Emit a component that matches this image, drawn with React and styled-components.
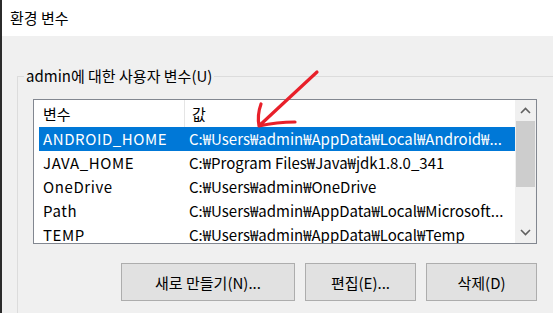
import React from "react";
import styled, { createGlobalStyle } from "styled-components";

const GlobalStyle = createGlobalStyle`
  html, body {
    margin: 0;
    padding: 0;
    background: #f0f0f0;
  }
  body {
    font-family: "Noto Sans CJK KR", "Noto Sans", sans-serif;
    font-size: 15px;
    color: #000;
  }
`;

const variables = [
  { name: "ANDROID_HOME", value: "C:₩Users₩admin₩AppData₩Local₩Android₩...", selected: true },
  { name: "JAVA_HOME", value: "C:₩Program Files₩Java₩jdk1.8.0_341" },
  { name: "OneDrive", value: "C:₩Users₩admin₩OneDrive" },
  { name: "Path", value: "C:₩Users₩admin₩AppData₩Local₩Microsoft..." },
  { name: "TEMP", value: "C:₩Users₩admin₩AppData₩Local₩Temp" },
];

const Window = styled.div`
  position: relative;
  width: 553px;
  height: 313px;
  overflow: hidden;
  box-sizing: border-box;
  border-left: 2px solid #2b2b2b;
  background: #f0f0f0;
`;

const TitleBar = styled.div`
  height: 36px;
  background: #fff;
  display: flex;
  align-items: center;
  padding-left: 8px;
  font-size: 15px;
  line-height: 20px;
`;

const Body = styled.div`
  padding: 30px 0 0 15px;
`;

const Group = styled.fieldset`
  margin: 0;
  width: 560px;
  height: 260px;
  box-sizing: border-box;
  border: 1px solid #dcdcdc;
  padding: 13px 0 0 15px;
`;

const Legend = styled.legend`
  margin-left: -9px;
  padding: 0 2px;
  line-height: 20px;
  font-size: 15px;
`;

const ListView = styled.div`
  width: 504px;
  height: 145px;
  box-sizing: border-box;
  border: 1px solid #828790;
  background: #fff;
  display: flex;
`;

const Table = styled.div`
  flex: 1;
  min-width: 0;
  overflow: hidden;
`;

const HeaderRow = styled.div`
  display: flex;
  height: 27px;
  align-items: stretch;
`;

const HeaderCell = styled.div`
  width: ${(p) => p.$width}px;
  flex: ${(p) => (p.$width ? "none" : "1")};
  display: flex;
  align-items: center;
  padding-left: ${(p) => p.$pad}px;
  box-sizing: border-box;
  border-right: ${(p) => (p.$sep ? "1px solid #e5e5e5" : "none")};
  line-height: 20px;
`;

const Row = styled.div`
  display: flex;
  height: 24px;
  align-items: center;
  margin-left: 5px;
  background: ${(p) => (p.$selected ? "#0078d7" : "transparent")};
  color: ${(p) => (p.$selected ? "#fff" : "#000")};
  line-height: 20px;
`;

const Cell = styled.div`
  width: ${(p) => (p.$width ? `${p.$width}px` : "auto")};
  flex: ${(p) => (p.$width ? "none" : "1")};
  padding-left: 4px;
  box-sizing: border-box;
  white-space: nowrap;
  overflow: hidden;
  letter-spacing: ${(p) => p.$spacing || 0}px;
`;

const ScrollBar = styled.div`
  width: 21px;
  background: #f0f0f0;
  display: flex;
  flex-direction: column;
`;

const ScrollButton = styled.div`
  height: 21px;
  display: flex;
  align-items: center;
  justify-content: center;
`;

const Track = styled.div`
  flex: 1;
  padding: 0 1px;
`;

const Thumb = styled.div`
  height: 66px;
  background: #cdcdcd;
`;

const ButtonRow = styled.div`
  display: flex;
  justify-content: flex-end;
  gap: 10px;
  width: 504px;
  margin-top: 19px;
`;

const Button = styled.button`
  width: ${(p) => p.$width}px;
  height: 38px;
  box-sizing: border-box;
  background: #e1e1e1;
  border: 1px solid #adadad;
  font-family: "Noto Sans CJK KR", "Noto Sans", sans-serif;
  font-size: 15px;
  color: #000;
  padding: 0;
  margin: 0;
`;

const Overlay = styled.svg`
  position: absolute;
  left: -2px;
  top: 0;
  pointer-events: none;
`;

const Chevron = ({ up }) => (
  <svg width="11" height="7" viewBox="0 0 11 7">
    <path
      d={up ? "M1 6 L5.5 1.5 L10 6" : "M1 1 L5.5 5.5 L10 1"}
      fill="none"
      stroke="#606060"
      strokeWidth="1.6"
    />
  </svg>
);

export default function App() {
  return (
    <>
      <GlobalStyle />
      <Window>
        <TitleBar>환경 변수</TitleBar>
        <Body>
          <Group>
            <Legend>admin에 대한 사용자 변수(U)</Legend>
            <ListView>
              <Table>
                <HeaderRow>
                  <HeaderCell $width={151} $pad={9} $sep>
                    변수
                  </HeaderCell>
                  <HeaderCell $pad={7}>값</HeaderCell>
                </HeaderRow>
                {variables.map((v) => (
                  <Row key={v.name} $selected={v.selected}>
                    <Cell $width={146} $spacing={0.6}>
                      {v.name}
                    </Cell>
                    <Cell>{v.value}</Cell>
                  </Row>
                ))}
              </Table>
              <ScrollBar>
                <ScrollButton>
                  <Chevron up />
                </ScrollButton>
                <Track>
                  <Thumb />
                </Track>
                <ScrollButton>
                  <Chevron />
                </ScrollButton>
              </ScrollBar>
            </ListView>
            <ButtonRow>
              <Button $width={174}>새로 만들기(N)...</Button>
              <Button $width={111}>편집(E)...</Button>
              <Button $width={111}>삭제(D)</Button>
            </ButtonRow>
          </Group>
        </Body>
        <Overlay width="553" height="313" viewBox="0 0 553 313">
          <path
            d="M317 72 Q289 98 260 125 M261 104 Q257 115 259 126 Q277 122 295 122"
            fill="none"
            stroke="#e8202a"
            strokeWidth="3.2"
            strokeLinecap="round"
            strokeLinejoin="round"
          />
        </Overlay>
      </Window>
    </>
  );
}
